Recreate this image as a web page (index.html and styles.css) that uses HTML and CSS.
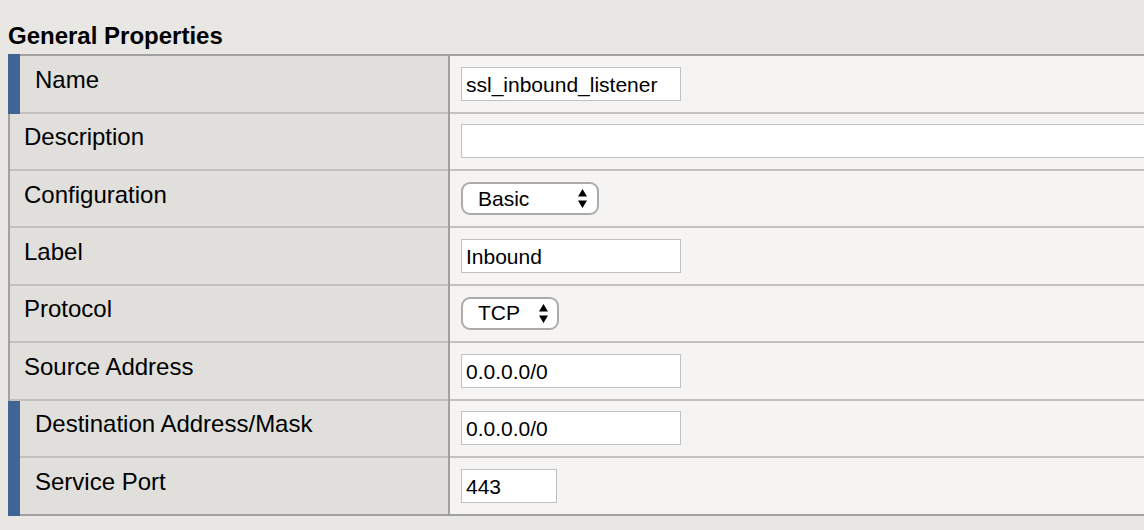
FILE: index.html
```html
<!DOCTYPE html>
<html>
<head>
<meta charset="utf-8">
<title>General Properties</title>
<link rel="stylesheet" href="styles.css">
</head>
<body>
<div class="page">
  <h2 class="section-title">General Properties</h2>
  <div class="props">
    <div class="row marked">
      <div class="mark blue"></div>
      <div class="label">Name</div>
      <div class="divider"></div>
      <div class="value"><input class="field" type="text" value="ssl_inbound_listener"></div>
    </div>
    <div class="row">
      <div class="mark"></div>
      <div class="label">Description</div>
      <div class="divider"></div>
      <div class="value"><input class="field wide" type="text" value=""></div>
    </div>
    <div class="row">
      <div class="mark"></div>
      <div class="label">Configuration</div>
      <div class="divider"></div>
      <div class="value">
        <div class="select basic"><span>Basic</span>
          <svg class="arrows" width="9" height="19" viewBox="0 0 9 19"><path d="M0 7.5 L4.5 0 L9 7.5 Z M0 11.5 L9 11.5 L4.5 19 Z" fill="#000"/></svg>
        </div>
      </div>
    </div>
    <div class="row">
      <div class="mark"></div>
      <div class="label">Label</div>
      <div class="divider"></div>
      <div class="value"><input class="field" type="text" value="Inbound"></div>
    </div>
    <div class="row">
      <div class="mark"></div>
      <div class="label">Protocol</div>
      <div class="divider"></div>
      <div class="value">
        <div class="select tcp"><span>TCP</span>
          <svg class="arrows" width="9" height="19" viewBox="0 0 9 19"><path d="M0 7.5 L4.5 0 L9 7.5 Z M0 11.5 L9 11.5 L4.5 19 Z" fill="#000"/></svg>
        </div>
      </div>
    </div>
    <div class="row">
      <div class="mark"></div>
      <div class="label">Source Address</div>
      <div class="divider"></div>
      <div class="value"><input class="field" type="text" value="0.0.0.0/0"></div>
    </div>
    <div class="row marked">
      <div class="mark blue"></div>
      <div class="label">Destination Address/Mask</div>
      <div class="divider"></div>
      <div class="value"><input class="field" type="text" value="0.0.0.0/0"></div>
    </div>
    <div class="row marked">
      <div class="mark blue"></div>
      <div class="label">Service Port</div>
      <div class="divider"></div>
      <div class="value"><input class="field port" type="text" value="443"></div>
    </div>
  </div>
</div>
</body>
</html>
```

FILE: styles.css
```css
html, body {
  margin: 0;
  padding: 0;
  background: #e9e7e3;
  overflow: hidden;
}

.page {
  padding: 0 0 0 8px;
  font-family: "Liberation Sans", Arial, sans-serif;
  color: #000;
}

.section-title {
  margin: 0 0 4px;
  padding-top: 22px;
  font-size: 24px;
  line-height: 28px;
  font-weight: bold;
}

.props {
  border-top: 2px solid #a1a1a1;
  border-bottom: 2px solid #a1a1a1;
  display: flex;
  flex-direction: column;
}

.row {
  display: flex;
  height: 57.4px;
}

.row:first-child {
  height: 57.6px;
}

.row:last-child {
  height: 55.6px;
}

.mark {
  flex: none;
  width: 2px;
  background: #a1a1a1;
}

.mark.blue {
  width: 12px;
  background: #3e6593;
}

.row:first-child .mark {
  margin-top: -2px;
}

.row:last-child .mark {
  margin-bottom: -2px;
}

.label {
  flex: 0 0 438px;
  box-sizing: border-box;
  display: flex;
  align-items: center;
  padding: 0 0 8px 14px;
  background: #e0dfdb;
  border-bottom: 2px solid #c2c1be;
  font-size: 24px;
}

.row.marked .label {
  flex-basis: 428px;
  padding-left: 15px;
}

.divider {
  flex: none;
  width: 2px;
  background: #a1a1a1;
}

.value {
  flex: 1;
  min-width: 0;
  overflow: hidden;
  box-sizing: border-box;
  display: flex;
  align-items: center;
  padding-left: 11px;
  background: #f5f4f2;
  border-bottom: 2px solid #c2c1be;
}

.row:last-child .label,
.row:last-child .value {
  border-bottom: none;
}

.field {
  flex: none;
  box-sizing: border-box;
  width: 220px;
  height: 34px;
  margin: 0;
  padding: 2px 4px 0;
  border: 1px solid #c0c0c0;
  background: #fff;
  font-family: "Liberation Sans", Arial, sans-serif;
  font-size: 21px;
  color: #000;
  outline: none;
}

.field.wide {
  width: 720px;
}

.field.port {
  width: 96px;
}

.select {
  flex: none;
  box-sizing: border-box;
  display: flex;
  align-items: center;
  justify-content: space-between;
  height: 33px;
  border: 2px solid #ababab;
  border-radius: 9px;
  background: #fff;
  padding: 0 10px 0 15px;
  font-size: 21px;
}

.select.basic {
  width: 138px;
}

.select.tcp {
  width: 98px;
  padding-right: 9px;
}

.arrows {
  display: block;
}
```
